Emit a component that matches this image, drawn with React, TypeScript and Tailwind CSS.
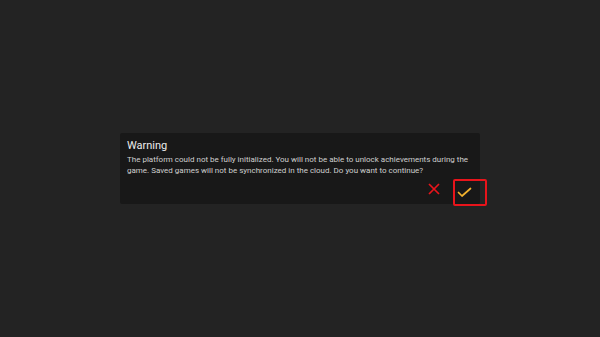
import React from "react";

export default function App() {
  return (
    <div
      className="w-[600px] h-[337px] bg-[#232323] flex items-center justify-center"
      style={{ fontFamily: "Roboto, 'Liberation Sans', sans-serif" }}
    >
      <div className="w-[360px] h-[71px] bg-[#181818] rounded-[2px] flex flex-col pl-[7px] pt-[6px]">
        <div className="text-[11px] leading-[14px] text-[#ececec]">Warning</div>
        <div className="text-[8px] leading-[11px] text-[#cfcfcf] mt-[1px] pr-[8px]">
          The platform could not be fully initialized. You will not be able to unlock achievements during the game. Saved games will not be synchronized in the cloud. Do you want to continue?
        </div>
        <div className="flex justify-end items-start mt-auto mr-[-7px] mb-[-2px] gap-[13px]">
          <svg width="12" height="12" viewBox="0 0 12 12" className="mt-[4px]">
            <path d="M1 1 L11 11 M11 1 L1 11" stroke="#e8141b" strokeWidth="1.7" fill="none" />
          </svg>
          <div className="w-[34px] h-[27px] border-2 border-[#e8141b] rounded-[2px] flex items-start justify-start pl-[2px] pt-[6px]">
            <svg width="15" height="11" viewBox="0 0 15 11">
              <path d="M1.5 5.5 L5 9 L13.5 1.5" stroke="#f2b22e" strokeWidth="1.7" fill="none" strokeLinecap="round" strokeLinejoin="round" />
            </svg>
          </div>
        </div>
      </div>
    </div>
  );
}
